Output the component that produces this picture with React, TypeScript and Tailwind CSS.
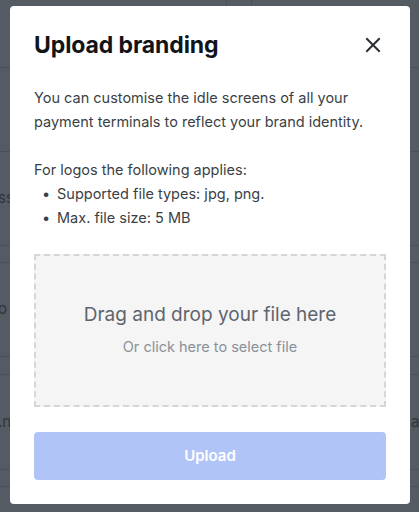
import React from "react";

const font = { fontFamily: "Inter, 'Noto Sans', sans-serif" };

function BgRow({ h, left, right }: { h: string; left?: string; right?: string }) {
  return (
    <div className={`${h} border-b border-[#4a5057] flex items-center justify-between text-[15px] text-[#30353b]`}>
      <span className="-ml-[2px]">{left}</span>
      <span className="-mr-[4px]">{right}</span>
    </div>
  );
}

export default function App() {
  return (
    <div className="relative w-[419px] h-[512px] overflow-hidden bg-[#555b63]" style={font}>
      {/* dimmed background page */}
      <div className="flex flex-col">
        <div className="h-[68px] border-b border-[#4a5057] flex">
          <div className="w-[227px] border-r border-[#4a5057]" />
          <div className="w-[25px] border-r border-[#4a5057]" />
        </div>
        <div className="h-[84px] border-b border-[#4a5057]" />
        <BgRow h="h-[94px]" left="ss" />
        <div className="h-[17px] border-b border-[#4a5057]" />
        <BgRow h="h-[94px]" left="o t" />
        <div className="h-[18px] border-b border-[#4a5057]" />
        <BgRow h="h-[95px]" left=".n" right="al" />
        <div className="h-[17px] border-b border-[#4a5057]" />
      </div>

      {/* modal */}
      <div className="absolute left-[10px] top-[6px] w-[400px] h-[498px] bg-white rounded-[4px] px-6 pt-6 flex flex-col">
        <div className="h-[30px] flex items-center justify-between">
          <h2 className="text-[23px] font-bold text-[#111418] leading-[30px] tracking-[-0.1px]">Upload branding</h2>
          <svg width="16" height="16" viewBox="0 0 16 16" className="mr-[5px]">
            <path d="M2 2L14 14M14 2L2 14" stroke="#2b2f35" strokeWidth="2" strokeLinecap="square" />
          </svg>
        </div>
        <p className="mt-[26px] text-[14.5px] leading-[24px] text-[#3a3f45]">
          You can customise the idle screens of all your payment terminals to reflect your brand identity.
        </p>
        <div className="mt-[24px] text-[14.5px] leading-[24px] text-[#3a3f45]">
          <p>For logos the following applies:</p>
          <div className="flex">
            <span className="w-[23px] pl-[8px]">•</span>
            <span>Supported file types: jpg, png.</span>
          </div>
          <div className="flex">
            <span className="w-[23px] pl-[8px]">•</span>
            <span>Max. file size: 5 MB</span>
          </div>
        </div>
        <div className="mt-[24px] h-[153px] border-2 border-dashed border-[#d4d6d8] bg-[#f5f5f5] flex flex-col items-center justify-center pb-[2px]">
          <div className="text-[19px] leading-[26px] text-[#5f656d]">Drag and drop your file here</div>
          <div className="mt-[9px] text-[14.5px] leading-[20px] text-[#8a9098]">Or click here to select file</div>
        </div>
        <button className="mt-[25px] h-[48px] rounded-[4px] bg-[#b1c4f7] text-white text-[15px] font-semibold">
          Upload
        </button>
      </div>
    </div>
  );
}
